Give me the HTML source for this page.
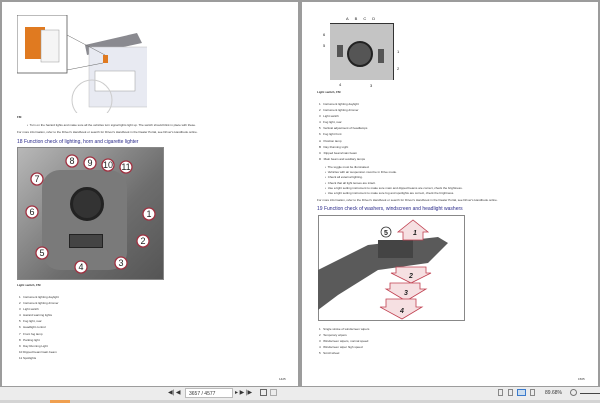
<!DOCTYPE html>
<html><head><style>
*{margin:0;padding:0;box-sizing:border-box}
body{width:600px;height:403px;background:#9c9c9c;position:relative;overflow:hidden;font-family:"Liberation Sans",sans-serif}
.pg{position:absolute;top:2px;height:384px;background:#fff}
.a{position:absolute;white-space:nowrap;color:#333}
.t{font-size:3px}
.h{font-size:5px;color:#2a2a8a}
.pn{font-size:3px}
.bar{position:absolute;left:0;top:387px;width:600px;height:13px;background:#ececec}
.bot{position:absolute;left:0;top:400px;width:600px;height:3px;background:#d4d4d4}
</style></head><body>
<div class="pg" style="left:2px;width:296px">
 <svg class="a" style="left:15px;top:13px" width="130" height="98">
  <rect x="0" y="0" width="50" height="58" fill="#fff" stroke="#555" stroke-width=".8"/>
  <rect x="8" y="12" width="20" height="32" fill="#e07a20"/>
  <rect x="24" y="15" width="18" height="32" fill="#f5f5f5" stroke="#999" stroke-width=".5"/>
  <polygon points="68,30 120,18 125,28 70,40" fill="#8a8a90"/>
  <rect x="72" y="32" width="62" height="60" fill="#e8eaf2" stroke="#bbb" stroke-width=".5"/>
  <rect x="86" y="40" width="5" height="8" fill="#e07a20"/>
  <rect x="78" y="56" width="40" height="20" fill="#fff" stroke="#999" stroke-width=".5"/>
  <path d="M50 20 L88 40 M50 55 L86 48" stroke="#666" stroke-width=".5"/>
  <circle cx="75" cy="85" r="20" fill="none" stroke="#ccc"/>
 </svg>
 <div class="a t" style="left:15px;top:113px;font-weight:bold">FM</div>
 <div class="a t" style="left:25px;top:121px">•&nbsp; Turn on the hazard lights and make sure all the vehicles turn signal lights light up. The switch should blink in place with these.</div>
 <div class="a t" style="left:15px;top:128px">For more information, refer to the Driver's Handbook or search for Driver's Handbook in the Dealer Portal, see Driver's Handbook online.</div>
 <div class="a h" style="left:15px;top:137px">18 Function check of lighting, horn and cigarette lighter</div>
 <div class="a" style="left:15px;top:145px;width:147px;height:133px;background:linear-gradient(135deg,#b8b8b8,#6e6e6e 60%,#555);border:1px solid #888"></div>
 <div class="a" style="left:40px;top:168px;width:85px;height:100px;border-radius:18px;background:#7a7a7a"></div>
 <div class="a" style="left:68px;top:185px;width:34px;height:34px;border-radius:50%;background:#333;border:3px solid #222"></div>
 <div class="a" style="left:67px;top:232px;width:34px;height:14px;background:#444;border:1px solid #222"></div>
 <svg class="a" style="left:15px;top:145px" width="147" height="133" font-family="Liberation Sans" font-size="11" text-anchor="middle">
  <g fill="#fff" stroke="#a03040" stroke-width="1.3">
   <circle cx="55" cy="14" r="6"/><circle cx="73" cy="16" r="6"/><circle cx="91" cy="18" r="6"/><circle cx="109" cy="20" r="6"/><circle cx="20" cy="32" r="6"/><circle cx="15" cy="65" r="6"/><circle cx="132" cy="67" r="6"/><circle cx="126" cy="94" r="6"/><circle cx="104" cy="116" r="6"/><circle cx="64" cy="120" r="6"/><circle cx="25" cy="106" r="6"/>
  </g>
  <g fill="#222" font-size="9">
   <text x="55" y="17">8</text><text x="73" y="19">9</text><text x="91" y="21">10</text><text x="109" y="23">11</text><text x="20" y="35">7</text><text x="15" y="68">6</text><text x="132" y="70">1</text><text x="126" y="97">2</text><text x="104" y="119">3</text><text x="64" y="123">4</text><text x="25" y="109">5</text>
  </g>
 </svg>
 <div class="a t" style="left:15px;top:281px;font-weight:bold">Light switch, FM</div>
 <div class="a t" style="left:17px;top:292px;line-height:6.1px">1&nbsp;&nbsp; Instrument lighting daylight<br>2&nbsp;&nbsp; Instrument lighting dimmer<br>3&nbsp;&nbsp; Light switch<br>4&nbsp;&nbsp; Hazard warning lights<br>5&nbsp;&nbsp; Fog light, rear<br>6&nbsp;&nbsp; Headlight control<br>7&nbsp;&nbsp; Front fog lamp<br>8&nbsp;&nbsp; Parking light<br>9&nbsp;&nbsp; Day Running Light<br>10 Dipped beam/main beam<br>11 Spotlights</div>
 <div class="a pn" style="left:277px;top:375px">1425</div>
</div>
<div class="pg" style="left:302px;width:296px">
 <div class="a" style="left:28px;top:21px;width:64px;height:57px;background:#c4c4c4;border-top:1px solid #333;border-right:1px solid #333"></div>
 <div class="a" style="left:45px;top:39px;width:26px;height:26px;border-radius:50%;background:#555;border:2px solid #222"></div>
 <div class="a" style="left:35px;top:43px;width:6px;height:12px;background:#555"></div>
 <div class="a" style="left:76px;top:47px;width:6px;height:14px;background:#555"></div>
 <div class="a" style="left:44px;top:14px;font-size:4px;color:#222;letter-spacing:6px">ABCD</div>
 <div class="a" style="left:21px;top:30px;font-size:4px;color:#222">6</div>
 <div class="a" style="left:21px;top:41px;font-size:4px;color:#222">5</div>
 <div class="a" style="left:95px;top:47px;font-size:4px;color:#222">1</div>
 <div class="a" style="left:95px;top:64px;font-size:4px;color:#222">2</div>
 <div class="a" style="left:37px;top:80px;font-size:4px;color:#222">4</div>
 <div class="a" style="left:68px;top:81px;font-size:4px;color:#222">3</div>
 <div class="a t" style="left:15px;top:88px;font-weight:bold">Light switch, FM</div>
 <div class="a t" style="left:17px;top:99px;line-height:6.1px">1&nbsp;&nbsp; Instrument lighting daylight<br>2&nbsp;&nbsp; Instrument lighting dimmer<br>3&nbsp;&nbsp; Light switch<br>4&nbsp;&nbsp; Fog light, rear<br>5&nbsp;&nbsp; Vertical adjustment of headlamps<br>6&nbsp;&nbsp; Fog light front<br>A&nbsp;&nbsp; Position lamp<br>B&nbsp;&nbsp; Day Running Light<br>C&nbsp;&nbsp; Dipped beam/main beam<br>D&nbsp;&nbsp; Main beam and auxiliary lamps</div>
 <div class="a t" style="left:23px;top:163px;line-height:5.2px">•&nbsp; The toggle must be illuminated.<br>•&nbsp; Vehicles with air suspension must be in Drive mode.<br>•&nbsp; Check all external lighting.<br>•&nbsp; Check that all light lenses are intact.<br>•&nbsp; Use a light setting instrument to make sure main and dipped beams are correct, check the brightness.<br>•&nbsp; Use a light setting instrument to make sure fog and spotlights are correct, check the brightness.</div>
 <div class="a t" style="left:15px;top:196px">For more information, refer to the Driver's Handbook or search for Driver's Handbook in the Dealer Portal, see Driver's Handbook online.</div>
 <div class="a h" style="left:15px;top:204px">19 Function check of washers, windscreen and headlight washers</div>
 <div class="a" style="left:16px;top:213px;width:147px;height:106px;border:1px solid #888;background:#fff"></div>
 <svg class="a" style="left:16px;top:213px" width="147" height="106" font-family="Liberation Sans" text-anchor="middle" font-weight="bold" font-style="italic">
  <path d="M0 55 L50 30 L120 22 L130 28 L110 48 L60 55 L20 80 L0 95Z" fill="#5a5a5a"/>
  <rect x="60" y="25" width="35" height="18" fill="#444"/>
  <g fill="#f6e0e2" stroke="#c04050" stroke-width=".8">
   <polygon points="85,25 85,17 80,17 95,5 110,17 105,17 105,25"/>
   <polygon points="78,52 108,52 108,58 113,58 93,68 73,58 78,58"/>
   <polygon points="72,68 102,68 102,74 108,74 88,86 68,74 72,74"/>
   <polygon points="68,84 98,84 98,92 104,92 84,104 62,92 68,92"/>
  </g>
  <g font-size="7" fill="#222"><text x="97" y="20">1</text><text x="93" y="63">2</text><text x="88" y="80">3</text><text x="84" y="98">4</text></g>
  <circle cx="68" cy="17" r="5" fill="#fff" stroke="#333" stroke-width=".8"/><text x="68" y="20" font-size="7" fill="#222" font-style="normal">5</text>
 </svg>
 <div class="a t" style="left:17px;top:324px;line-height:6.1px">1&nbsp;&nbsp; Single stroke of windscreen wipers<br>2&nbsp;&nbsp; Temporary wipers<br>3&nbsp;&nbsp; Windscreen wipers, normal speed<br>4&nbsp;&nbsp; Windscreen wiper high speed<br>5&nbsp;&nbsp; Scroll wheel</div>
 <div class="a pn" style="left:276px;top:375px">1505</div>
</div>
<div class="bar">
 <div class="a" style="left:168px;top:2px;font-size:6px;color:#333">◀| ◀</div>
 <div class="a" style="left:185px;top:1px;width:48px;height:10px;background:#fff;border:1px solid #bbb;font-size:5px;padding:2px 3px;color:#333">3657 / 4577</div>
 <div class="a" style="left:235px;top:2px;font-size:6px;color:#333">▸ ▶ |▶</div>
 <div class="a" style="left:260px;top:2px;width:7px;height:7px;border:1px solid #666"></div>
 <div class="a" style="left:270px;top:2px;width:7px;height:7px;border:1px solid #aaa"></div>
 <div class="a" style="left:498px;top:2px;width:5px;height:7px;border:1px solid #888"></div>
 <div class="a" style="left:508px;top:2px;width:5px;height:7px;border:1px solid #888"></div>
 <div class="a" style="left:517px;top:2px;width:9px;height:7px;border:1px solid #3a7acc;background:#cde"></div>
 <div class="a" style="left:530px;top:2px;width:5px;height:7px;border:1px solid #888"></div>
 <div class="a" style="left:545px;top:3px;font-size:5px;color:#333">89.68%</div>
 <div class="a" style="left:570px;top:2px;width:7px;height:7px;border:1px solid #777;border-radius:50%"></div>
 <div class="a" style="left:580px;top:6px;width:20px;height:1px;background:#444"></div>
</div>
<div class="bot">
 <div class="a" style="left:50px;top:0;width:20px;height:3px;background:#f0a050"></div>
</div>
</body></html>
